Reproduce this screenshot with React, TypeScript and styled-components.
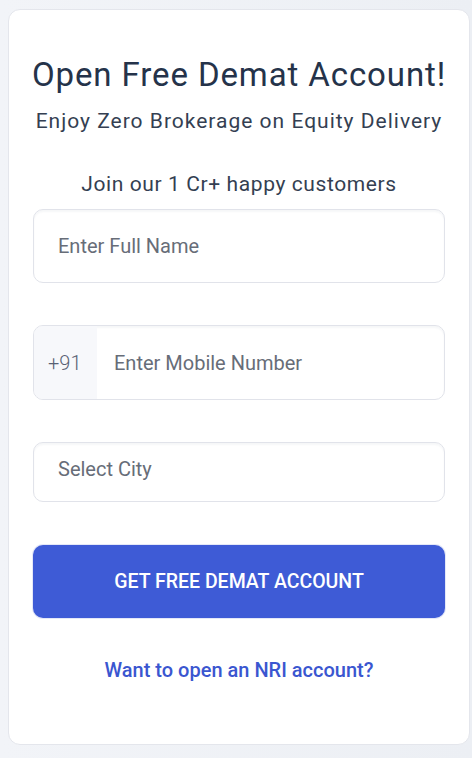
import React from 'react'
import styled, { createGlobalStyle } from 'styled-components'

const GlobalStyle = createGlobalStyle`
    * {
        box-sizing: border-box;
    }
    body {
        margin: 0;
        background: #eef0f5;
        font-family: Roboto, "Liberation Sans", sans-serif;
    }
`

const Page = styled.div`
    width: 472px;
    height: 758px;
    padding: 9px 2px 13px 8px;
    background: linear-gradient(90deg, #f2f4f8 0%, #eceff4 100%);
`

const Card = styled.div`
    height: 100%;
    background: #ffffff;
    border: 1px solid #e4e6ec;
    border-radius: 12px;
    padding: 45px 24px 0 24px;
    display: flex;
    flex-direction: column;
    align-items: center;
`

const Title = styled.h1`
    margin: 0;
    font-size: 33px;
    font-weight: 400;
    color: #25334a;
    letter-spacing: 0.9px;
    line-height: 40px;
    white-space: nowrap;
`

const Subtitle = styled.p<{ gap: number; spacing: number }>`
    margin: ${({ gap }) => gap}px 0 0 0;
    font-size: 21px;
    font-weight: 400;
    color: #343f52;
    line-height: 28px;
    letter-spacing: ${({ spacing }) => spacing}px;
    white-space: nowrap;
`

const Form = styled.form`
    width: 100%;
    margin-top: 11px;
    display: flex;
    flex-direction: column;
`

const Field = styled.div<{ h: number; gap: number }>`
    height: ${({ h }) => h}px;
    margin-top: ${({ gap }) => gap}px;
    display: flex;
    align-items: stretch;
    border: 1px solid #e1e3ea;
    border-radius: 10px;
    overflow: hidden;
    box-shadow: inset 0 2px 2px rgba(30, 40, 80, 0.04);
    background: #fff;
`

const Prefix = styled.span`
    width: 63px;
    display: flex;
    align-items: center;
    padding-left: 14px;
    background: #f7f8fb;
    color: #586173;
    font-size: 20px;
    font-weight: 300;
`

const Input = styled.input<{ pad: number; lift?: number }>`
    flex: 1;
    border: none;
    outline: none;
    background: transparent;
    padding: 0 0 ${({ lift }) => lift ?? 0}px ${({ pad }) => pad}px;
    font-family: inherit;
    font-size: 20px;
    color: #333;

    &::placeholder {
        color: #676d78;
    }
`

const Button = styled.button`
    margin-top: 43px;
    height: 73px;
    border: none;
    border-radius: 10px;
    background: #3e5bd6;
    color: #ffffff;
    font-family: inherit;
    font-size: 19.5px;
    font-weight: 500;
    cursor: pointer;
    box-shadow: 0 0 0 1px #e4e8f8;
`

const NriLink = styled.a`
    margin-top: 40px;
    align-self: center;
    color: #3a56d0;
    font-size: 20px;
    line-height: 24px;
    font-weight: 500;
    text-decoration: none;
    cursor: pointer;
`

const App: React.FC = () => {
    return (
        <Page>
            <GlobalStyle />
            <Card>
                <Title>Open Free Demat Account!</Title>
                <Subtitle gap={12} spacing={1}>
                    Enjoy Zero Brokerage on Equity Delivery
                </Subtitle>
                <Subtitle gap={35} spacing={0.6}>
                    Join our 1 Cr+ happy customers
                </Subtitle>

                <Form onSubmit={(e) => e.preventDefault()}>
                    <Field h={74} gap={0}>
                        <Input pad={24} placeholder="Enter Full Name" />
                    </Field>
                    <Field h={75} gap={42}>
                        <Prefix>+91</Prefix>
                        <Input pad={17} placeholder="Enter Mobile Number" />
                    </Field>
                    <Field h={60} gap={42}>
                        <Input pad={24} lift={6} placeholder="Select City" />
                    </Field>
                    <Button type="submit">GET FREE DEMAT ACCOUNT</Button>
                    <NriLink>Want to open an NRI account?</NriLink>
                </Form>
            </Card>
        </Page>
    )
}

export default App
